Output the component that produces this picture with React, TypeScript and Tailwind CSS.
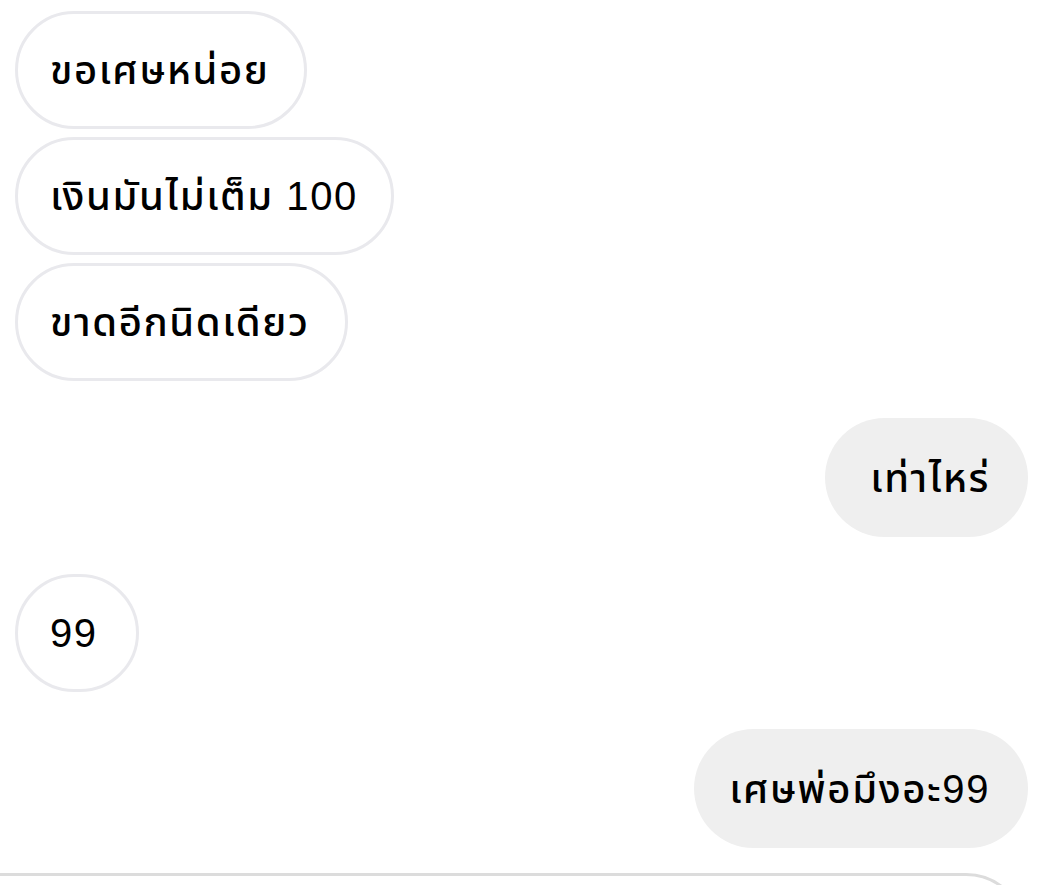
import React from "react";

const font = { fontFamily: '"Liberation Sans", "Noto Sans Thai", "Noto Sans", "DejaVu Sans", sans-serif' };

function Left({ text, className = "" }: { text: string; className?: string }) {
  return (
    <div className={"flex h-[118px] items-center self-start rounded-full border-[3px] border-[#e9e9ed] bg-white pl-[32px] text-[40px] font-medium leading-none tracking-[1.6px] text-black " + className}>
      <span>{text}</span>
    </div>
  );
}

function Right({ text, className = "" }: { text: string; className?: string }) {
  return (
    <div className={"flex h-[119px] items-center self-end rounded-full bg-[#efefef] pr-[38px] text-[40px] font-medium leading-none tracking-[1.6px] text-black " + className}>
      <span>{text}</span>
    </div>
  );
}

export default function App() {
  return (
    <div className="relative h-[885px] w-[1052px] overflow-hidden bg-white" style={font}>
      <div className="flex flex-col pl-[15px] pr-[24px] pt-[11px]">
        <Left text="ขอเศษหน่อย" className="pr-[34px]" />
        <Left text="เงินมันไม่เต็ม 100" className="mt-[8px] pr-[33px]" />
        <Left text="ขาดอีกนิดเดียว" className="mt-[8px] pr-[36px]" />
        <Right text="เท่าไหร่" className="mt-[37px] pl-[45px]" />
        <Left text="99" className="mt-[37px] pr-[38px]" />
        <Right text="เศษพ่อมึงอะ99" className="mt-[37px] pl-[35px]" />
        <div className="ml-[-25px] mr-[2px] mt-[25px] h-[80px] rounded-tr-[60px] border-[3px] border-[#dcdcdc]" />
      </div>
    </div>
  );
}
